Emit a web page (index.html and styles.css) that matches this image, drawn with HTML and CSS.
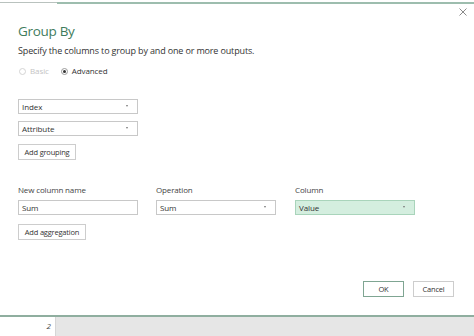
FILE: index.html
```html
<!DOCTYPE html>
<html lang="en">
<head>
    <meta charset="UTF-8">
    <meta name="viewport" content="width=device-width, initial-scale=1.0">
    <title>Group By</title>
    <link rel="stylesheet" href="styles.css">
</head>
<body>
<div class="app">

    <!-- Window edge above the dialog -->
    <div class="topline">
        <span class="topline-cell"></span>
        <span class="topline-rest"></span>
    </div>

    <!-- Group By dialog -->
    <div class="dialog">
        <div class="dialog-head">
            <button class="close" title="Close">
                <svg width="8" height="8" viewBox="0 0 8 8">
                    <path d="M0.5 0.5 L7.5 7.5 M7.5 0.5 L0.5 7.5" stroke="#8a8a8a" stroke-width="1" fill="none"/>
                </svg>
            </button>
        </div>

        <h1 class="title">Group By</h1>
        <p class="subtitle">Specify the columns to group by and one or more outputs.</p>

        <div class="modes">
            <label class="radio disabled"><span class="radio-dot"></span>Basic</label>
            <label class="radio checked"><span class="radio-dot"></span>Advanced</label>
        </div>

        <div class="grouping">
            <div class="select">Index</div>
            <div class="select">Attribute</div>
            <button class="btn">Add grouping</button>
        </div>

        <div class="aggregation">
            <div class="agg-label">New column name</div>
            <div class="agg-label">Operation</div>
            <div class="agg-label">Column</div>
            <div class="field">Sum</div>
            <div class="select">Sum</div>
            <div class="select active">Value</div>
        </div>
        <button class="btn add-agg">Add aggregation</button>

        <div class="footer">
            <button class="btn primary">OK</button>
            <button class="btn">Cancel</button>
        </div>
    </div>

    <!-- Spreadsheet row behind the dialog -->
    <div class="sheet">
        <div class="row-cell">2</div>
        <div class="row-rest"></div>
    </div>

</div>
</body>
</html>
```

FILE: styles.css
```css
/* Page */
body {
    margin: 0;
    font-family: "Open Sans", "Noto Sans", sans-serif;
    color: #333;
    background: #fff;
}

.app {
    width: 474px;
    height: 336px;
    display: flex;
    flex-direction: column;
    overflow: hidden;
}

/* Thin window edge at the top */
.topline {
    height: 4px;
    display: flex;
    align-items: flex-start;
    padding-top: 2px;
    box-sizing: border-box;
}

.topline-cell {
    width: 57px;
    height: 1px;
    background: #b9c2be;
}

.topline-rest {
    flex: 1;
    height: 2px;
    background: #9dbdae;
}

/* Dialog */
.dialog {
    flex: 1;
    display: flex;
    flex-direction: column;
    align-items: flex-start;
    padding: 0 7px 18px 18px;
    border-bottom: 2px solid #8fae9f;
    box-sizing: border-box;
}

.dialog-head {
    align-self: stretch;
    display: flex;
    justify-content: flex-end;
    height: 18px;
    padding-top: 4px;
    box-sizing: border-box;
}

.close {
    border: none;
    background: none;
    padding: 0;
    width: 8px;
    height: 8px;
    display: flex;
    cursor: pointer;
}

.title {
    margin: 0;
    font-size: 13.5px;
    line-height: 18px;
    font-weight: 400;
    letter-spacing: -0.3px;
    color: #3f7c5c;
}

.subtitle {
    margin: 5px 0 0;
    font-size: 9px;
    line-height: 12px;
    letter-spacing: -0.15px;
    color: #333;
}

/* Basic / Advanced radios */
.modes {
    display: flex;
    gap: 11px;
    margin-top: 8px;
    font-size: 8px;
    line-height: 12px;
    letter-spacing: -0.1px;
}

.radio {
    display: flex;
    align-items: center;
    gap: 4px;
    padding-left: 1px;
}

.radio-dot {
    width: 5px;
    height: 5px;
    border: 1px solid #9a9a9a;
    border-radius: 50%;
    display: flex;
    align-items: center;
    justify-content: center;
}

.radio.disabled {
    color: #c4c4c4;
}

.radio.disabled .radio-dot {
    border-color: #d4d4d4;
}

.radio.checked .radio-dot::after {
    content: "";
    width: 3px;
    height: 3px;
    border-radius: 50%;
    background: #333;
}

/* Dropdowns, inputs, buttons */
.select,
.field {
    width: 120px;
    height: 15px;
    box-sizing: border-box;
    border: 1px solid #c8c8c8;
    background: #fff;
    font-size: 8px;
    line-height: 13px;
    letter-spacing: -0.1px;
    padding-left: 3px;
    position: relative;
}

.select::after {
    content: "";
    position: absolute;
    right: 9px;
    top: 5px;
    border-left: 1.5px solid transparent;
    border-right: 1.5px solid transparent;
    border-top: 2px solid #777;
}

.select.active {
    background: #d4eedf;
    border-color: #a9d4bb;
}

.btn {
    height: 16px;
    box-sizing: border-box;
    border: 1px solid #cdcdcd;
    background: #fff;
    font-family: inherit;
    font-size: 7.5px;
    letter-spacing: -0.2px;
    white-space: nowrap;
    color: #333;
    padding: 0;
    cursor: pointer;
}

.btn.primary {
    border-color: #7fa592;
}

.grouping {
    display: flex;
    flex-direction: column;
    align-items: flex-start;
    gap: 7px;
    margin-top: 22px;
}

.grouping .btn {
    margin-top: 1px;
    width: 58px;
}

/* Aggregation table */
.aggregation {
    display: grid;
    grid-template-columns: 138px 139px 120px;
    row-gap: 5px;
    margin-top: 24px;
}

.agg-label {
    font-size: 8px;
    line-height: 11px;
    letter-spacing: -0.15px;
    color: #444;
}

.add-agg {
    margin-top: 9px;
    width: 68px;
}

.footer {
    align-self: stretch;
    margin-top: auto;
    display: flex;
    justify-content: flex-end;
    gap: 9px;
    padding-right: 13px;
}

.footer .btn {
    width: 41px;
}

/* Sheet row under the dialog */
.sheet {
    height: 19px;
    display: flex;
}

.row-cell {
    width: 56px;
    border-right: 1px solid #d6d6d6;
    text-align: right;
    padding: 3px 4px 0 0;
    box-sizing: border-box;
    font-size: 8px;
    font-style: italic;
    color: #444;
}

.row-rest {
    flex: 1;
    background: #e6e6e6;
}
```
